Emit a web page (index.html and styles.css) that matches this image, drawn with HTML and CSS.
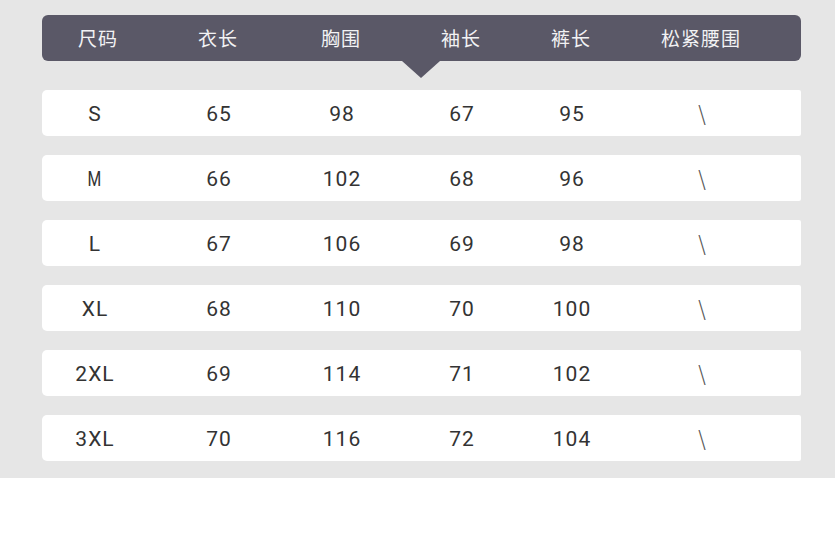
FILE: index.html
```html
<!DOCTYPE html>
<html lang="zh">
<head>
<meta charset="utf-8">
<link rel="stylesheet" href="styles.css">
</head>
<body>
<div class="panel">
  <div class="table">
    <div class="head">
      <span>尺码</span><span>衣长</span><span>胸围</span><span>袖长</span><span>裤长</span><span>松紧腰围</span>
      <i class="pointer"></i>
    </div>
    <div class="row"><span>S</span><span>65</span><span>98</span><span>67</span><span>95</span><span class="slash">\</span></div>
    <div class="row"><span class="m">M</span><span>66</span><span>102</span><span>68</span><span>96</span><span class="slash">\</span></div>
    <div class="row"><span>L</span><span>67</span><span>106</span><span>69</span><span>98</span><span class="slash">\</span></div>
    <div class="row"><span>XL</span><span>68</span><span>110</span><span>70</span><span>100</span><span class="slash">\</span></div>
    <div class="row"><span>2XL</span><span>69</span><span>114</span><span>71</span><span>102</span><span class="slash">\</span></div>
    <div class="row"><span>3XL</span><span>70</span><span>116</span><span>72</span><span>104</span><span class="slash">\</span></div>
  </div>
</div>
</body>
</html>
```
FILE: styles.css
```css
html, body {
  margin: 0;
  padding: 0;
  background: #ffffff;
}
.panel {
  background: #e6e6e6;
  height: 478px;
  padding: 15px 34px 0 42px;
  box-sizing: border-box;
}
.table {
  width: 759px;
  display: flex;
  flex-direction: column;
  gap: 19px;
}
.head, .row {
  display: grid;
  grid-template-columns: 106px 140px 106px 134px 86px 174px;
  align-items: center;
  justify-items: center;
  height: 46px;
}
.head {
  position: relative;
  background: #5a5867;
  border-radius: 6px;
  color: #f2f2f4;
  font-family: "Noto Sans CJK SC", sans-serif;
  font-size: 19px;
  letter-spacing: 1px;
  margin-bottom: 10px;
}
.head span {
  margin-top: -2px;
}
.head span:first-child {
  margin-left: 6px;
}
.pointer {
  position: absolute;
  left: 360px;
  top: 46px;
  width: 0;
  height: 0;
  border-left: 19px solid transparent;
  border-right: 19px solid transparent;
  border-top: 17px solid #5a5867;
}
.row {
  background: #ffffff;
  border-radius: 5px 2px 2px 5px;
  color: #333333;
  font-family: "Roboto", "Liberation Sans", sans-serif;
  font-size: 21px;
  letter-spacing: 1px;
}
.row span {
  margin-top: 2px;
}
.row span:not(:first-child) {
  margin-left: 2px;
}
.m {
  transform: scaleX(0.75);
}
.row .slash {
  color: #555555;
  font-size: 25px;
  font-weight: 300;
  margin-left: 0;
  margin-top: 4px;
  transform: scaleX(0.8);
}
```
